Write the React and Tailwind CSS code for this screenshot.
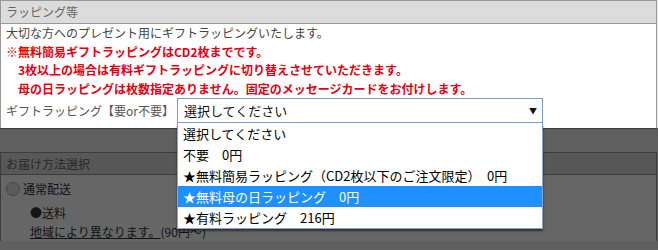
export default function App() {
  const options = [
    '選択してください',
    '不要　0円',
    '★無料簡易ラッピング（CD2枚以下のご注文限定）　0円',
    '★無料母の日ラッピング　0円',
    '★有料ラッピング　216円',
  ]
  const selected = 3

  return (
    <div
      className="relative w-[658px] h-[250px] overflow-hidden bg-[#eeeeee] text-[#333]"
      style={{ fontFamily: '"Noto Sans CJK JP", "Noto Sans", sans-serif' }}
    >
      {/* Wrapping section */}
      <div className="w-[657px]">
        <div className="h-[24px] border border-[#999] bg-[#dcdcdc] px-[5px] text-[12px] leading-[22px] text-[#666]">
          ラッピング等
        </div>
        <div className="border-x border-b border-[#999] bg-white px-[5px] pb-[5px] text-[12px] leading-[18.6px]">
          <p className="text-[#444]">大切な方へのプレゼント用にギフトラッピングいたします。</p>
          <p className="font-bold text-[#e60012]">※無料簡易ギフトラッピングはCD2枚までです。</p>
          <p className="pl-[12px] font-bold text-[#e60012]">
            3枚以上の場合は有料ギフトラッピングに切り替えさせていただきます。
          </p>
          <p className="pl-[12px] font-bold text-[#e60012]">
            母の日ラッピングは枚数指定ありません。固定のメッセージカードをお付けします。
          </p>
          <div className="flex items-center">
            <span className="w-[171px] text-[#555]">ギフトラッピング【要or不要】</span>
            <div className="relative">
              <div className="flex h-[25px] w-[366px] items-center justify-between border border-[#7a9cd6] bg-white pl-[6px] pr-[5px] text-[13px] text-[#111]">
                <span>選択してください</span>
                <span className="text-[8px] leading-none">▼</span>
              </div>
              <ul className="absolute left-0 top-[25px] z-20 w-[366px] border border-t-0 border-[#8fa3c8] bg-white py-0 text-[13px] leading-[21px] text-black shadow-[0_2px_2px_rgba(0,0,0,0.55)]">
                {options.map((o, i) => (
                  <li
                    key={i}
                    className={
                      i === selected
                        ? 'h-[21px] whitespace-nowrap bg-[#1e90ff] pl-[5px] text-white'
                        : 'h-[21px] whitespace-nowrap pl-[5px]'
                    }
                  >
                    {o}
                  </li>
                ))}
              </ul>
            </div>
          </div>
        </div>
      </div>

      {/* Delivery section */}
      <div className="mt-[23px] w-[657px]">
        <div className="h-[23px] border border-[#999] bg-[#dcdcdc] px-[5px] text-[12px] leading-[21px] text-[#666]">
          お届け方法選択
        </div>
        <div className="border-x border-[#999] bg-white px-[5px] pt-[4px] text-[12px] leading-[19px] text-[#333]">
          <div className="flex items-center gap-[3px]">
            <span className="h-[14px] w-[14px] rounded-full border border-[#aaa] bg-[#e4e4e4]" />
            <span>通常配送</span>
          </div>
          <div className="mt-[5px] pl-[24px]">●送料</div>
          <div className="pl-[24px]">
            <span className="underline">地域により異なります。</span>
            <span>(90円～)</span>
          </div>
        </div>
      </div>

      {/* dim overlay */}
      <div className="absolute inset-x-0 top-[128px] bottom-0 z-10 bg-black/60" />
    </div>
  )
}
